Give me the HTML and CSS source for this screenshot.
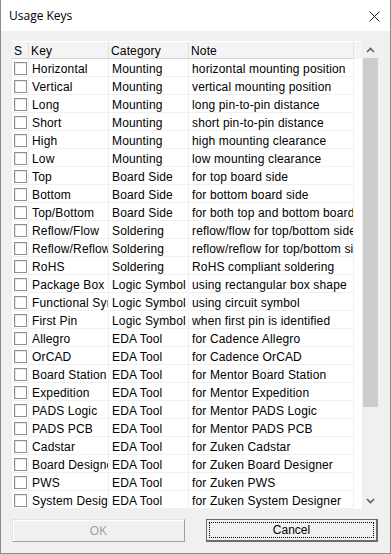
FILE: index.html
```html
<!doctype html>
<html lang="en">
<head>
  <meta charset="utf-8">
  <title>Usage Keys</title>
  <link rel="stylesheet" href="styles.css">
</head>
<body>
  <div class="window">
    <!-- Title bar -->
    <div class="titlebar">
      <span class="title">Usage Keys</span>
      <svg class="close" width="11" height="11" viewBox="0 0 11 11" aria-label="Close">
        <path d="M0.5 0.5L10.5 10.5M10.5 0.5L0.5 10.5" stroke="#1a1a1a" stroke-width="1" fill="none"/>
      </svg>
    </div>

    <div class="content">
      <!-- List view -->
      <div class="listview">
        <div class="table">
          <div class="row head">
            <span class="cell">S</span>
            <span class="cell">Key</span>
            <span class="cell">Category</span>
            <span class="cell">Note</span>
          </div>
          <div class="row"><span class="cell"><i class="check"></i></span><span class="cell">Horizontal</span><span class="cell">Mounting</span><span class="cell">horizontal mounting position</span></div>
          <div class="row"><span class="cell"><i class="check"></i></span><span class="cell">Vertical</span><span class="cell">Mounting</span><span class="cell">vertical mounting position</span></div>
          <div class="row"><span class="cell"><i class="check"></i></span><span class="cell">Long</span><span class="cell">Mounting</span><span class="cell">long pin-to-pin distance</span></div>
          <div class="row"><span class="cell"><i class="check"></i></span><span class="cell">Short</span><span class="cell">Mounting</span><span class="cell">short pin-to-pin distance</span></div>
          <div class="row"><span class="cell"><i class="check"></i></span><span class="cell">High</span><span class="cell">Mounting</span><span class="cell">high mounting clearance</span></div>
          <div class="row"><span class="cell"><i class="check"></i></span><span class="cell">Low</span><span class="cell">Mounting</span><span class="cell">low mounting clearance</span></div>
          <div class="row"><span class="cell"><i class="check"></i></span><span class="cell">Top</span><span class="cell">Board Side</span><span class="cell">for top board side</span></div>
          <div class="row"><span class="cell"><i class="check"></i></span><span class="cell">Bottom</span><span class="cell">Board Side</span><span class="cell">for bottom board side</span></div>
          <div class="row"><span class="cell"><i class="check"></i></span><span class="cell">Top/Bottom</span><span class="cell">Board Side</span><span class="cell">for both top and bottom board side</span></div>
          <div class="row"><span class="cell"><i class="check"></i></span><span class="cell">Reflow/Flow</span><span class="cell">Soldering</span><span class="cell">reflow/flow for top/bottom side</span></div>
          <div class="row"><span class="cell"><i class="check"></i></span><span class="cell">Reflow/Reflow</span><span class="cell">Soldering</span><span class="cell">reflow/reflow for top/bottom side</span></div>
          <div class="row"><span class="cell"><i class="check"></i></span><span class="cell">RoHS</span><span class="cell">Soldering</span><span class="cell">RoHS compliant soldering</span></div>
          <div class="row"><span class="cell"><i class="check"></i></span><span class="cell">Package Box</span><span class="cell">Logic Symbol</span><span class="cell">using rectangular box shape</span></div>
          <div class="row"><span class="cell"><i class="check"></i></span><span class="cell">Functional Symbol</span><span class="cell">Logic Symbol</span><span class="cell">using circuit symbol</span></div>
          <div class="row"><span class="cell"><i class="check"></i></span><span class="cell">First Pin</span><span class="cell">Logic Symbol</span><span class="cell">when first pin is identified</span></div>
          <div class="row"><span class="cell"><i class="check"></i></span><span class="cell">Allegro</span><span class="cell">EDA Tool</span><span class="cell">for Cadence Allegro</span></div>
          <div class="row"><span class="cell"><i class="check"></i></span><span class="cell">OrCAD</span><span class="cell">EDA Tool</span><span class="cell">for Cadence OrCAD</span></div>
          <div class="row"><span class="cell"><i class="check"></i></span><span class="cell">Board Station</span><span class="cell">EDA Tool</span><span class="cell">for Mentor Board Station</span></div>
          <div class="row"><span class="cell"><i class="check"></i></span><span class="cell">Expedition</span><span class="cell">EDA Tool</span><span class="cell">for Mentor Expedition</span></div>
          <div class="row"><span class="cell"><i class="check"></i></span><span class="cell">PADS Logic</span><span class="cell">EDA Tool</span><span class="cell">for Mentor PADS Logic</span></div>
          <div class="row"><span class="cell"><i class="check"></i></span><span class="cell">PADS PCB</span><span class="cell">EDA Tool</span><span class="cell">for Mentor PADS PCB</span></div>
          <div class="row"><span class="cell"><i class="check"></i></span><span class="cell">Cadstar</span><span class="cell">EDA Tool</span><span class="cell">for Zuken Cadstar</span></div>
          <div class="row"><span class="cell"><i class="check"></i></span><span class="cell">Board Designer</span><span class="cell">EDA Tool</span><span class="cell">for Zuken Board Designer</span></div>
          <div class="row"><span class="cell"><i class="check"></i></span><span class="cell">PWS</span><span class="cell">EDA Tool</span><span class="cell">for Zuken PWS</span></div>
          <div class="row"><span class="cell"><i class="check"></i></span><span class="cell">System Designer</span><span class="cell">EDA Tool</span><span class="cell">for Zuken System Designer</span></div>
        </div>

        <!-- Scrollbar -->
        <div class="scrollbar">
          <div class="arrow">
            <svg width="9" height="6" viewBox="0 0 9 6"><path d="M1 5L4.5 1.5L8 5" stroke="#606060" stroke-width="1.6" fill="none"/></svg>
          </div>
          <div class="track"><div class="thumb"></div></div>
          <div class="arrow">
            <svg width="9" height="6" viewBox="0 0 9 6"><path d="M1 1L4.5 4.5L8 1" stroke="#606060" stroke-width="1.6" fill="none"/></svg>
          </div>
        </div>
      </div>

      <!-- Buttons -->
      <div class="buttons">
        <button class="btn" disabled>OK</button>
        <button class="btn default"><span class="focus">Cancel</span></button>
      </div>
    </div>
  </div>
</body>
</html>
```

FILE: styles.css
```css
/* ---------- Reset ---------- */
*,*::before,*::after{box-sizing:border-box}
body{margin:0;background:#f0f0f0;
     font-family:"Liberation Sans",Arial,sans-serif;font-size:12px;color:#000}

/* ---------- Window ---------- */
.window{
  width:391px;
  height:554px;
  border:1px solid #8c8c8c;
  border-top:0;
  background:#f0f0f0;
  display:flex;
  flex-direction:column;
}
.titlebar{
  height:31px;
  background:#fff;
  display:flex;
  align-items:center;
  justify-content:space-between;
  padding:1px 10px 1px 8px;
}
.title{font-family:"Open Sans","Noto Sans",sans-serif;font-size:12px}
.close{margin-top:1px}

.content{padding:10px 10px 0 11px;display:flex;flex-direction:column;gap:10px}

/* ---------- List view ---------- */
.listview{
  height:468px;
  width:367px;
  display:flex;
  background:#fff;
}
.table{flex:1;overflow:hidden;letter-spacing:.15px}
.row{
  display:grid;
  grid-template-columns:17px 80px 80px 165px;
  height:18px;
}
.cell{
  border-right:1px solid #f0f0f0;
  border-bottom:1px solid #f0f0f0;
  padding:3px 0 0 3px;
  white-space:nowrap;
  overflow:hidden;
  line-height:14px;
}
.row.head{height:18px;background:#f4f4f4;border-top:1px solid #fff}
.row.head .cell{
  border-right:1px solid #e3e3e3;
  border-bottom:1px solid #d5d5d5;
  line-height:14px;
  padding:2px 0 0 2px;
}
.row .cell:first-child{padding:3px 0 0 2px}
.row.head .cell:first-child{padding:2px 0 0 2px}
.check{
  display:block;
  width:13px;
  height:13px;
  border:1px solid #8e8e8e;
  background:#fff;
  box-shadow:inset 1px 1px 0 #e8e8e8;
}

/* ---------- Scrollbar ---------- */
.scrollbar{
  width:17px;
  display:flex;
  flex-direction:column;
  background:#f0f0f0;
}
.arrow{height:17px;display:flex;align-items:center;justify-content:center}
.track{flex:1;padding:0 1px}
.thumb{height:349px;background:#cdcdcd}

/* ---------- Buttons ---------- */
.buttons{display:flex;gap:21px}
.btn{
  width:173px;
  height:23px;
  font:inherit;
  font-family:"Liberation Sans",Arial,sans-serif;
  font-size:12px;
  color:#000;
  background:#f0f0f0;
  border:1px solid;
  border-color:#e3e3e3 #a0a0a0 #a0a0a0 #e3e3e3;
  box-shadow:inset 1px 1px 0 #fff;
  padding:0;
}
.btn:disabled{color:#a0a0a0}
.btn.default{
  width:172px;
  border:2px solid #6a6a6a;
  border-width:1px 2px 2px 1px;
  box-shadow:none;
  padding:2px;
}
.focus{
  display:block;
  height:100%;
  border:1px dotted #000;
  line-height:15px;
}
```
